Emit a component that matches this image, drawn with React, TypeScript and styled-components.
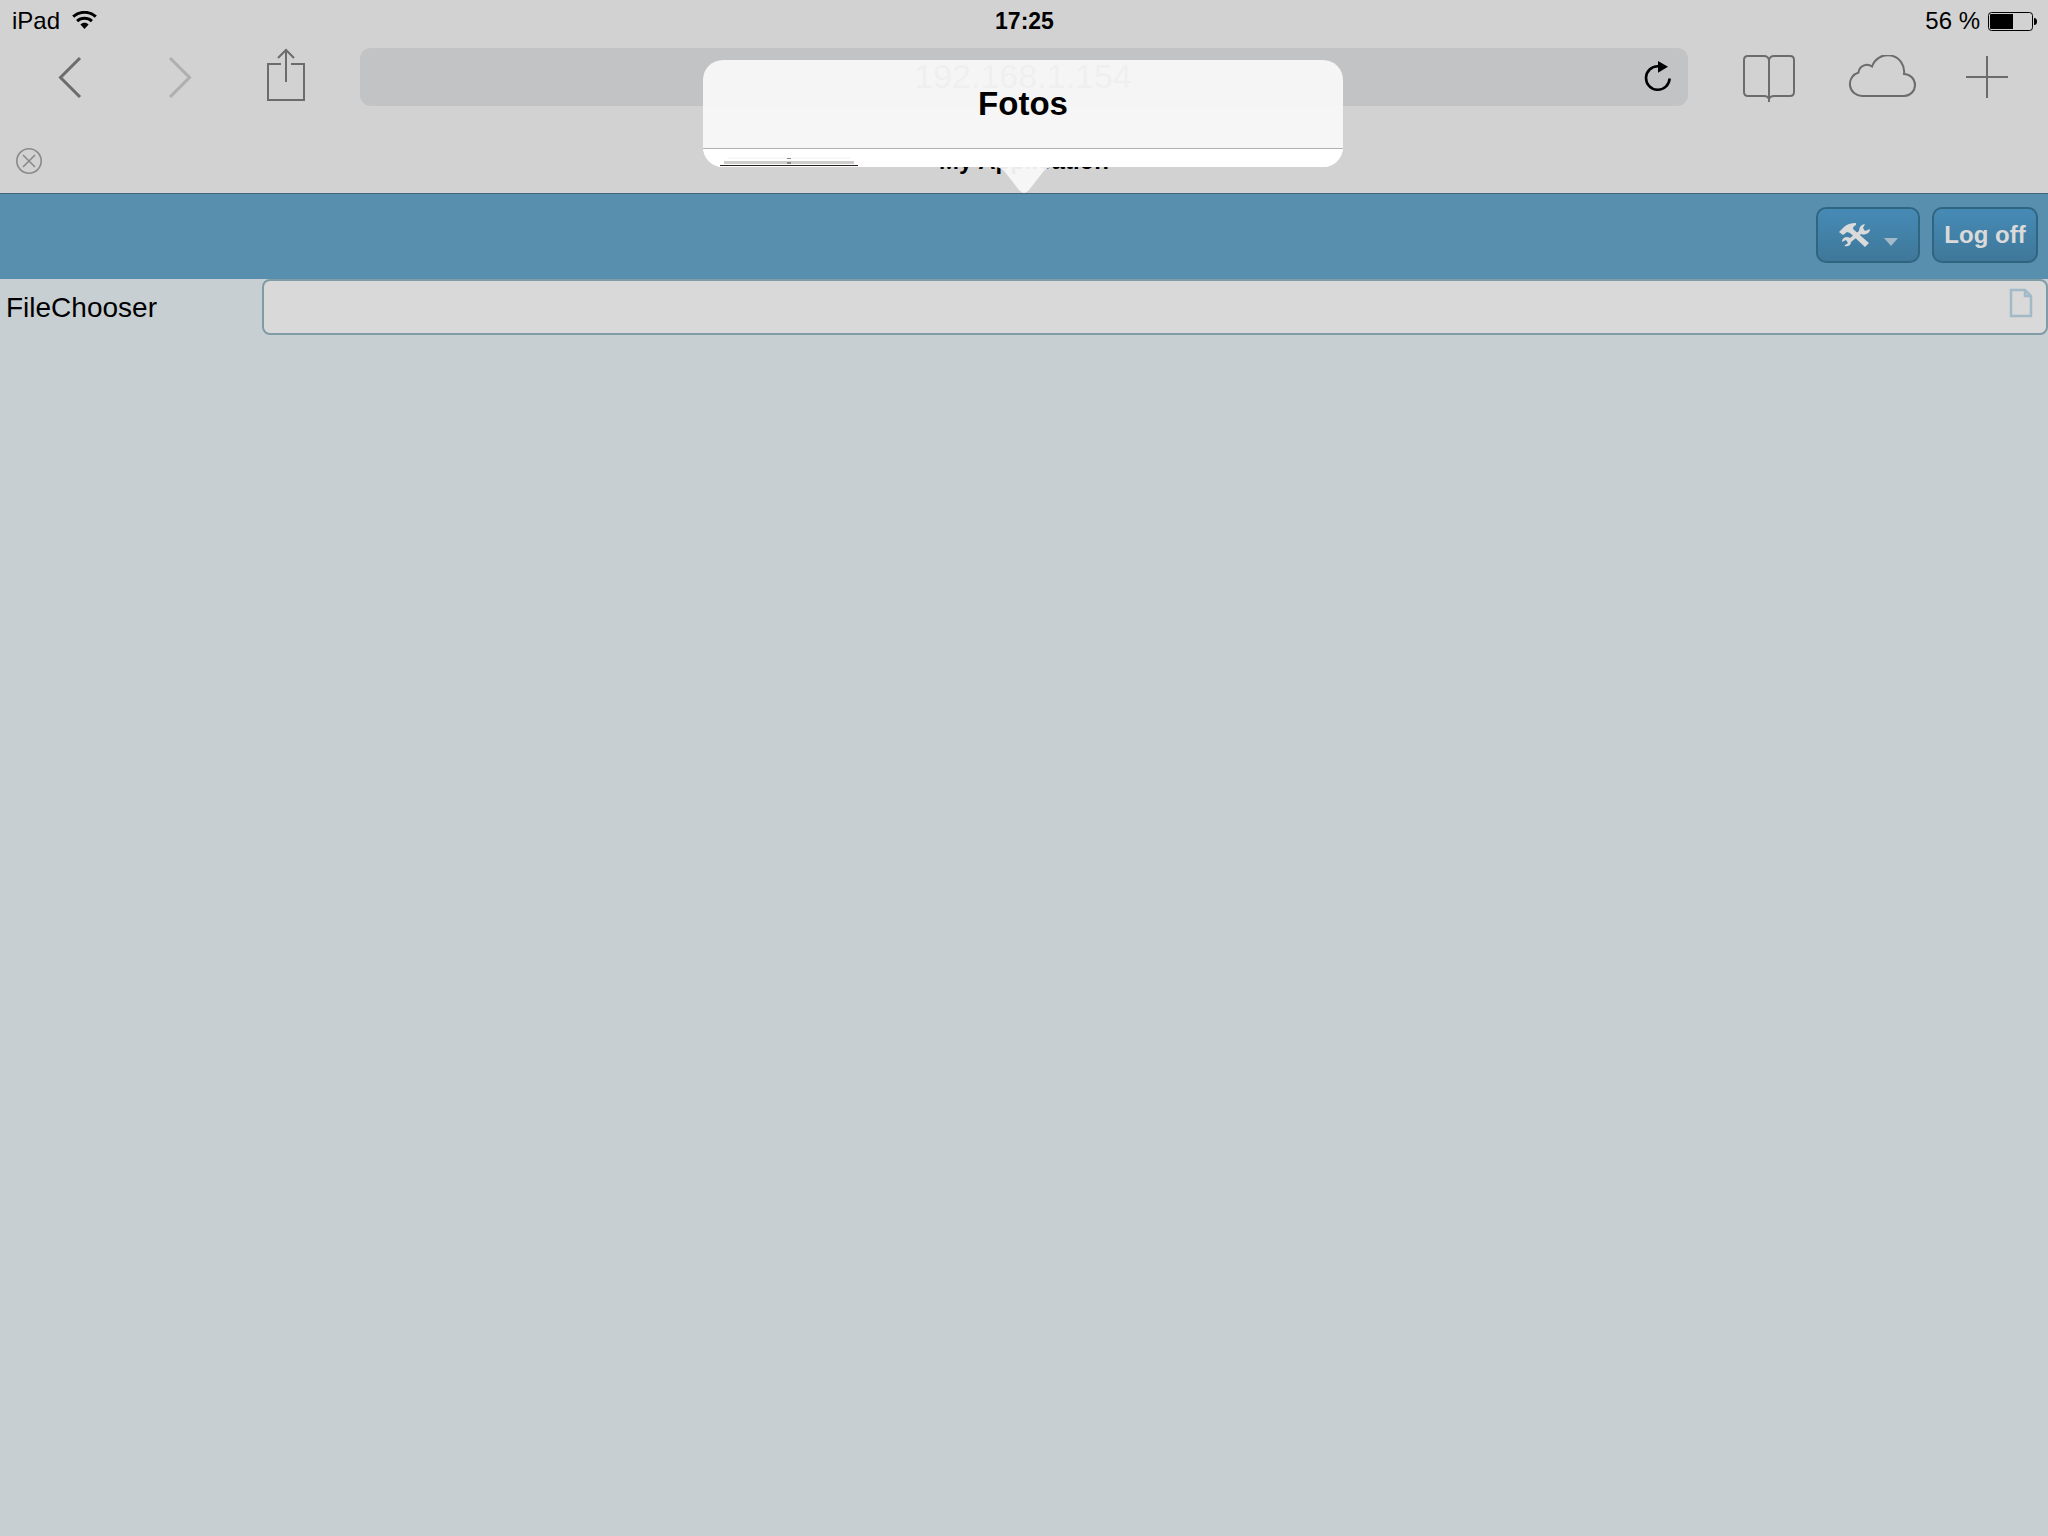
import React from 'react';
import styled, { createGlobalStyle } from 'styled-components';

const GlobalStyle = createGlobalStyle`
  *, *::before, *::after { box-sizing: border-box; }
  html, body, #root { height: 100%; }
  body {
    margin: 0;
    background: #c8cfd2;
    color: #000;
    font-family: "Liberation Sans", Arial, sans-serif;
    font-size: 24px;
  }
  svg { display: block; }
`;

const Screen = styled.div`
  min-height: 100%;
  display: flex;
  flex-direction: column;
`;

const Chrome = styled.header`
  position: relative;
  background: #d2d2d2;
  border-bottom: 1px solid #416679;
`;

const StatusBar = styled.div`
  display: grid;
  grid-template-columns: 1fr auto 1fr;
  align-items: center;
  height: 40px;
  padding: 2px 11px 0 12px;
`;

const StatusGroup = styled.div<{ $end?: boolean }>`
  display: flex;
  align-items: center;
  gap: ${(p) => (p.$end ? '8px' : '12px')};
  justify-content: ${(p) => (p.$end ? 'flex-end' : 'flex-start')};
`;

const Clock = styled.time`
  font-size: 23px;
  font-weight: 700;
`;

const Toolbar = styled.nav`
  display: flex;
  align-items: center;
  height: 74px;
  padding: 0 40px 0 56px;
`;

const IconButton = styled.button`
  display: flex;
  padding: 0;
  border: 0;
  background: none;
  color: #6c6c6c;
  &:disabled { color: #afafaf; }
`;

const ShareButton = styled(IconButton)`
  margin-left: 73px;
  padding-bottom: 4px;
`;

const CloseButton = styled(IconButton)`
  color: #8a8a8a;
`;

const PickButton = styled(IconButton)`
  padding-bottom: 8px;
`;

const NavGroup = styled.div<{ $gap: string }>`
  display: flex;
  align-items: center;
  gap: ${(p) => p.$gap};
`;

const Address = styled.div`
  flex: 1;
  display: flex;
  align-items: center;
  height: 58px;
  margin: 0 55px;
  padding: 0 16px 0 42px;
  border-radius: 11px;
  background: #c2c3c5;
`;

const AddressInput = styled.input`
  flex: 1;
  min-width: 0;
  padding: 0 0 2px;
  border: 0;
  outline: 0;
  background: none;
  color: #505050;
  font: 34px "Liberation Sans", Arial, sans-serif;
  text-align: center;
`;

const TabBar = styled.div`
  display: grid;
  grid-template-columns: 26px 1fr 26px;
  align-items: center;
  height: 79px;
  padding: 15px 16px 0;
  font-weight: 700;
  text-align: center;
`;

const Popover = styled.section`
  position: absolute;
  top: 60px;
  left: 50%;
  width: 640px;
  margin-left: -321px;
`;

const PopoverBody = styled.div`
  overflow: hidden;
  border-radius: 20px;
  background: rgba(248, 248, 248, 0.95);
`;

const PopoverTitle = styled.h1`
  margin: 0;
  border-bottom: 1px solid #b0b0b0;
  font-size: 33px;
  line-height: 88px;
  text-align: center;
`;

const PopoverRow = styled.div`
  height: 18px;
  padding: 8px 16px 0 17px;
  background: #fff;
`;

const PopoverArrow = styled.svg`
  margin: 0 auto;
  overflow: visible;
`;

const AppHeader = styled.div`
  display: flex;
  justify-content: flex-end;
  gap: 12px;
  height: 85px;
  padding: 13px 10px 0;
  background: #588fae;
`;

const HeaderButton = styled.button<{ $menu?: boolean }>`
  display: flex;
  align-items: center;
  justify-content: ${(p) => (p.$menu ? 'flex-start' : 'center')};
  gap: 11px;
  height: 56px;
  width: ${(p) => (p.$menu ? '104px' : '106px')};
  padding: 0 0 0 ${(p) => (p.$menu ? '20px' : '0')};
  border: 2px solid #306582;
  border-radius: 10px;
  background: linear-gradient(#468bb6, #3f7799);
  color: #dadada;
  font: 700 24px "Liberation Sans", Arial, sans-serif;
`;

const FormRow = styled.div`
  display: flex;
  align-items: center;
`;

const FieldLabel = styled.label`
  width: 262px;
  padding: 2px 0 0 6px;
  font-size: 28px;
`;

const FieldBox = styled.div`
  flex: 1;
  display: flex;
  align-items: center;
  height: 56px;
  padding: 0 13px;
  border: 2px solid #7e9ba6;
  border-radius: 8px;
  background: #d9d9d9;
`;

const FileInput = styled.input`
  flex: 1;
  min-width: 0;
  height: 100%;
  padding: 0;
  border: 0;
  outline: 0;
  background: none;
  font: 28px "Liberation Sans", Arial, sans-serif;
`;

function WifiIcon() {
  return (
    <svg width="25" height="20" viewBox="0 1 25 20" fill="none" stroke="#000" strokeWidth="3">
      <path d="M1.2 5.6C7.6-.1 17.4-.1 23.8 5.6" transform="translate(0 1)" />
      <path d="M5.1 10.1C9.3 6.3 15.7 6.3 19.9 10.1" transform="translate(0 1)" />
      <path d="M8.4 13.5C10.7 11.3 14.3 11.3 16.6 13.5L12.5 18Z" fill="#000" stroke="none" transform="translate(0 1)" />
    </svg>
  );
}

function BatteryIcon() {
  return (
    <svg width="49" height="19" viewBox="0 0 49 19">
      <rect x=".5" y=".5" width="44" height="18" rx="3" fill="none" stroke="#000" />
      <path d="M3 2H25V17H3Q2 17 2 16V3Q2 2 3 2Z" />
      <path d="M46 6Q49 6 49 9.500Q49 13 46 13Z" />
    </svg>
  );
}

function ChevronIcon({ forward }: { forward?: boolean }) {
  return (
    <svg width="26" height="42" viewBox="0 0 26 42" fill="none" stroke="currentColor" strokeWidth="3">
      <path d={forward ? 'M2 2L21.500 21.500L2 41' : 'M24 2L4.500 21.500L24 41'} />
    </svg>
  );
}

function ShareIcon() {
  return (
    <svg width="38" height="54" viewBox="0 0 38 54" fill="none" stroke="currentColor" strokeWidth="2">
      <path d="M14 16H1V52H37V16H24M19 34V2M11 10L19 2L27 10" />
    </svg>
  );
}

function ReloadIcon() {
  return (
    <svg width="28" height="32" viewBox="0 1 28 32">
      <path d="M25.600 18.500A11.800 11.800 0 1 1 14 6.200" fill="none" stroke="#000" strokeWidth="2.600" />
      <path d="M14 1L24 6.800L14 12.800Z" />
    </svg>
  );
}

function BookIcon() {
  return (
    <svg width="55" height="50" viewBox="0 0 55 50" fill="none" stroke="currentColor" strokeWidth="2">
      <path d="M26 8Q25 4 21 4H5Q1 4 1 8V40Q1 44 5 44H21Q25 44 26 47Q27 44 31 44H47Q51 44 51 40V8Q51 4 47 4H31Q27 4 26 8ZM26 6V50" />
    </svg>
  );
}

function CloudIcon() {
  return (
    <svg width="68" height="44" viewBox="-1 0 68 44" fill="none" stroke="currentColor" strokeWidth="2">
      <path d="M13 41A12 12 0 0 1 9.500 17.500A8.500 8.500 0 0 1 23 11.500A16.500 16.500 0 0 1 55 19A11 11 0 0 1 55 41Z" />
    </svg>
  );
}

function PlusIcon() {
  return (
    <svg width="42" height="42" viewBox="0 0 42 42" fill="none" stroke="currentColor" strokeWidth="2">
      <path d="M21 0V42M0 21H42" />
    </svg>
  );
}

function CloseIcon() {
  return (
    <svg width="26" height="26" viewBox="0 0 26 26" fill="none" stroke="currentColor" strokeWidth="1.600">
      <circle cx="13" cy="13" r="12.200" />
      <path d="M7 7L19 19M19 7L7 19" />
    </svg>
  );
}

function ToolsIcon() {
  return (
    <svg width="34" height="26" viewBox="0 0 34 26" fill="#dadada">
      <path d="M1 10L6 5Q10 1 18 1L18 3Q15 4 15 7L31 21L27 25L12 11L9 10L5 13Z" />
      <path d="M27 2L25 6L27 9L32 7Q32 11 28 12Q25 13 23 12L13 20Q13 25 6 24L10 21L8 18L4 20Q4 16 8 15Q11 15 12 16L21 9Q21 3 27 2Z" />
    </svg>
  );
}

function CaretIcon() {
  return (
    <svg width="16" height="22" viewBox="0 0 16 22" fill="#a2bac8">
      <path d="M1 14H15L8 22Z" />
    </svg>
  );
}

function FileIcon() {
  return (
    <svg width="24" height="30" viewBox="0 0 24 30" fill="none" stroke="#a2b9c8" strokeWidth="2.500">
      <path d="M2 2H16L22 8V28H2ZM16 2V8H22" />
    </svg>
  );
}

function AlbumStack() {
  return (
    <svg width="138" height="9" viewBox="0 0 138 9">
      <path d="M8 0H130V2H8Z" fill="#f8f8f8" />
      <path d="M4 4H134V7H4Z" fill="#cdcdcd" />
      <path d="M67 1H71V2H67ZM67 5H71V7H67Z" fill="#888" />
      <path d="M0 8H138V9H0Z" fill="#2b1f1b" />
    </svg>
  );
}

export default function App() {
  return (
    <Screen>
      <GlobalStyle />
      <Chrome>
        <StatusBar>
          <StatusGroup>
            <span>iPad</span>
            <WifiIcon />
          </StatusGroup>
          <Clock>17:25</Clock>
          <StatusGroup $end>
            <span>56 %</span>
            <BatteryIcon />
          </StatusGroup>
        </StatusBar>
        <Toolbar aria-label="Browser">
          <NavGroup $gap="86px">
            <IconButton aria-label="Back"><ChevronIcon /></IconButton>
            <IconButton aria-label="Forward" disabled><ChevronIcon forward /></IconButton>
          </NavGroup>
          <ShareButton aria-label="Share"><ShareIcon /></ShareButton>
          <Address>
            <AddressInput aria-label="Address" defaultValue="192.168.1.154" />
            <IconButton aria-label="Reload"><ReloadIcon /></IconButton>
          </Address>
          <NavGroup $gap="50px">
            <IconButton aria-label="Bookmarks"><BookIcon /></IconButton>
            <IconButton aria-label="iCloud tabs"><CloudIcon /></IconButton>
            <IconButton aria-label="New tab"><PlusIcon /></IconButton>
          </NavGroup>
        </Toolbar>
        <TabBar>
          <CloseButton aria-label="Close tab"><CloseIcon /></CloseButton>
          <span>My Application</span>
        </TabBar>
        <Popover aria-label="Fotos">
          <PopoverBody>
            <PopoverTitle>Fotos</PopoverTitle>
            <PopoverRow><AlbumStack /></PopoverRow>
          </PopoverBody>
          <PopoverArrow width="60" height="26" viewBox="-1 0 60 26" fill="#f8f8f8" fillOpacity="0.95">
            <path d="M0 0H60Q53 0 49 5L35 23Q30 29 25 23L11 5Q7 0 0 0Z" />
          </PopoverArrow>
        </Popover>
      </Chrome>
      <AppHeader>
        <HeaderButton $menu aria-label="Tools"><ToolsIcon /><CaretIcon /></HeaderButton>
        <HeaderButton>Log off</HeaderButton>
      </AppHeader>
      <FormRow>
        <FieldLabel htmlFor="file-chooser">FileChooser</FieldLabel>
        <FieldBox>
          <FileInput id="file-chooser" type="text" />
          <PickButton aria-label="Choose file"><FileIcon /></PickButton>
        </FieldBox>
      </FormRow>
    </Screen>
  );
}
